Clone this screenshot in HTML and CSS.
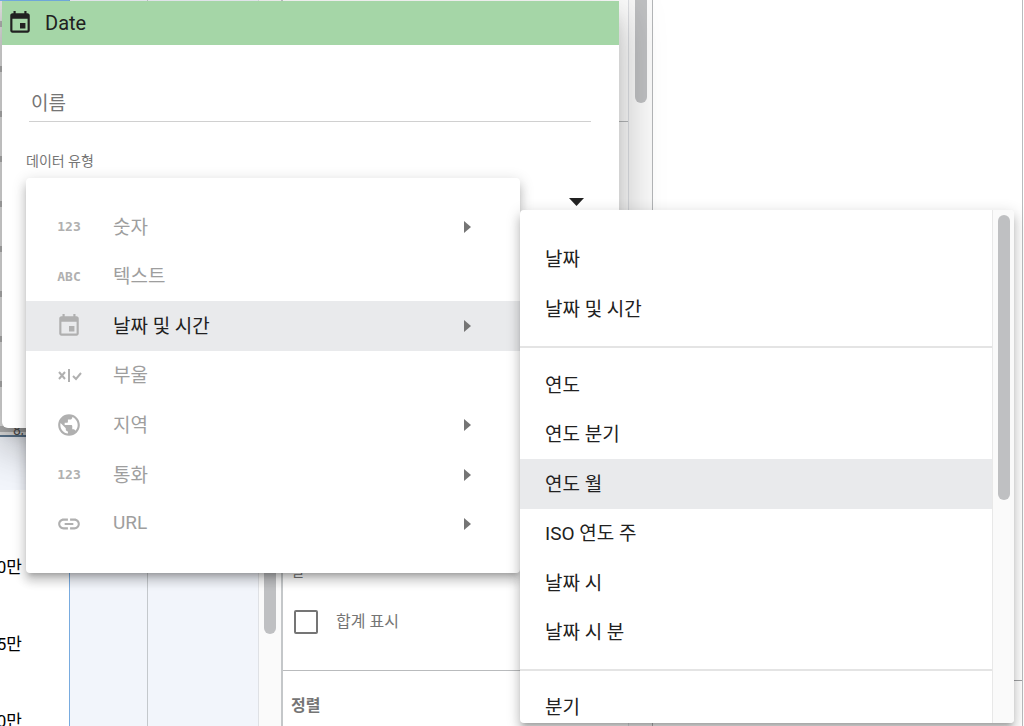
FILE: index.html
```
<!DOCTYPE html>
<html lang="ko">
<head>
    <meta charset="utf-8">
    <title>Date</title>
    <link rel="stylesheet" href="styles.css">
</head>

<body>
<svg class="sprite" aria-hidden="true">
  <symbol id="calendar" viewBox="0 0 24 24">
    <path d="M17 12h-5v5h5v-5zM16 1v2H8V1H6v2H5c-1.11 0-1.99.9-1.99 2L3 19c0 1.1.89 2 2 2h14c1.1 0 2-.9 2-2V5c0-1.1-.9-2-2-2h-1V1h-2zm3 18H5V8h14v11z"/>
  </symbol>
  <symbol id="arrow" viewBox="0 0 7 12">
    <path d="M0 0l7 6-7 6z"/>
  </symbol>
</svg>

<!-- report editor -->
<div class="report">
  <div class="chart">
    <div class="chart-rows"><span>8,</span></div>
    <div class="chart-band"></div>
    <ul class="axis">
      <li>0만</li>
      <li>5만</li>
      <li>0만</li>
    </ul>
  </div>
  <div class="canvas"></div>
  <div class="canvas wide"></div>
  <div class="track track-canvas"><div class="thumb"></div></div>
  <div class="setup">
    <div class="setup-section first"></div>
    <div class="setup-section totals">
      <span class="setup-label">열</span>
      <label class="check"><input type="checkbox">합계 표시</label>
    </div>
    <div class="setup-section">
      <h3>정렬</h3>
    </div>
  </div>
  <div class="track track-setup"><div class="thumb"></div></div>
  <div class="fields"></div>
</div>

<!-- field editor -->
<div class="dialog">
  <div class="dialog-head">
    <svg class="icon"><use href="#calendar"/></svg>
    <span>Date</span>
  </div>
  <div class="dialog-body">
    <input class="name" type="text" placeholder="이름" aria-label="이름">
    <label class="type-label" for="type">데이터 유형</label>
    <div class="type-box">
      <select id="type" class="type">
        <option></option>
      </select>
      <svg class="caret" viewBox="0 0 15 8"><path d="M0 0h15L7.500 8z"/></svg>
    </div>
  </div>
</div>

<!-- data type menu -->
<div class="menu types">
  <ul class="rows">
    <li><button class="item"><span class="glyph">123</span><span class="text">숫자</span><svg class="arrow"><use href="#arrow"/></svg></button></li>
    <li><button class="item"><span class="glyph">ABC</span><span class="text">텍스트</span></button></li>
    <li><button class="item on"><svg class="icon"><use href="#calendar"/></svg><span class="text">날짜 및 시간</span><svg class="arrow"><use href="#arrow"/></svg></button></li>
    <li><button class="item"><svg class="icon" viewBox="0 0 26 26"><path d="M3 10l6 7M9 10l-6 7M13 7v13M17 14l3 3 5-6" fill="none" stroke="currentColor" stroke-width="2"/></svg><span class="text">부울</span></button></li>
    <li><button class="item"><svg class="icon" viewBox="0 0 24 24"><path d="M12 2C6.480 2 2 6.480 2 12s4.480 10 10 10 10-4.480 10-10S17.520 2 12 2zm-1 17.930c-3.950-.49-7-3.850-7-7.930 0-.62.080-1.210.210-1.790L9 15v1c0 1.100.9 2 2 2v1.930zm6.900-2.540c-.26-.81-1-1.390-1.900-1.390h-1v-3c0-.55-.45-1-1-1H8v-2h2c.55 0 1-.45 1-1V7h2c1.100 0 2-.9 2-2v-.41c2.930 1.190 5 4.060 5 7.410 0 2.080-.8 3.970-2.100 5.390z"/></svg><span class="text">지역</span><svg class="arrow"><use href="#arrow"/></svg></button></li>
    <li><button class="item"><span class="glyph">123</span><span class="text">통화</span><svg class="arrow"><use href="#arrow"/></svg></button></li>
    <li><button class="item"><svg class="icon" viewBox="0 0 24 24"><path d="M3.900 12c0-1.710 1.390-3.100 3.100-3.100h4V7H7c-2.760 0-5 2.240-5 5s2.240 5 5 5h4v-1.900H7c-1.710 0-3.100-1.390-3.100-3.100zM8 13h8v-2H8v2zm9-6h-4v1.900h4c1.710 0 3.100 1.390 3.100 3.100s-1.390 3.100-3.100 3.100h-4V17h4c2.760 0 5-2.240 5-5s-2.240-5-5-5z"/></svg><span class="text">URL</span><svg class="arrow"><use href="#arrow"/></svg></button></li>
  </ul>
</div>

<!-- date format submenu -->
<div class="menu formats">
  <div class="groups">
    <ul class="group two">
      <li><button class="item">날짜</button></li>
      <li><button class="item">날짜 및 시간</button></li>
    </ul>
    <ul class="group six">
      <li><button class="item">연도</button></li>
      <li><button class="item">연도 분기</button></li>
      <li><button class="item on">연도 월</button></li>
      <li><button class="item">ISO 연도 주</button></li>
      <li><button class="item">날짜 시</button></li>
      <li><button class="item">날짜 시 분</button></li>
    </ul>
    <ul class="group">
      <li><button class="item">분기</button></li>
    </ul>
  </div>
  <div class="track track-menu"><div class="thumb"></div></div>
</div>
</body>
</html>
```

FILE: styles.css
```
* {
  box-sizing: border-box;
}

body {
  margin: 0;
  overflow: hidden;
  background: #fff;
  color: #212121;
  font-family: Roboto, "Noto Sans CJK KR", sans-serif;
}

ul {
  list-style: none;
  margin: 0;
  padding: 0;
}

button, input, select {
  font: inherit;
  color: inherit;
}

.sprite {
  display: none;
}

.icon {
  width: 26px;
  height: 26px;
  fill: currentColor;
}

/* report editor */
.report {
  display: flex;
  height: 100vh;
}

.chart {
  width: 70px;
  border-right: 1px solid #78abdf;
}

.chart-rows {
  display: flex;
  align-items: flex-end;
  height: 437px;
  padding-left: 13px;
  overflow: hidden;
  border-top: 1px solid #78b4ea;
  border-bottom: 2px solid #5d7891;
  background: repeating-linear-gradient(#e4e4e4 0 20px, #b4b4b4 20px 26px, #e4e4e4 26px 45px);
  color: #555;
  font-size: 14px;
  line-height: 10px;
}

.chart-band {
  height: 53px;
  background: #f2f5fb;
}

.axis {
  display: grid;
  grid-auto-rows: 77px;
  align-items: center;
  justify-content: end;
  padding-top: 37px;
  padding-right: 47px;
  color: #000;
  font-size: 17px;
}

.axis li {
  white-space: nowrap;
}

.canvas {
  width: 78px;
  background: #f2f5fb;
  border-right: 1px solid #c4c8cc;
}

.wide {
  width: 111px;
  border-right-color: #dfe1e5;
}

.track {
  flex: none;
  background: #fafafa;
}

.thumb {
  width: 12px;
  border-radius: 6px;
  background: #bfc0c2;
}

.track-canvas {
  width: 24px;
  padding: 340px 0 0 5px;
  border-right: 2px solid #c4c7c9;
}

.track-canvas .thumb {
  height: 294px;
}

.setup {
  width: 345px;
}

.setup-section {
  padding: 24px 8px;
  border-bottom: 1px solid #b9bbbd;
}

.setup-section:last-child {
  border: 0;
}

.first {
  height: 122px;
}

.totals {
  display: flex;
  flex-direction: column;
  justify-content: flex-end;
  gap: 29px;
  height: 549px;
  padding: 0 8px 36px;
  color: #757575;
}

.setup-label {
  font-size: 14px;
  line-height: 20px;
}

.check {
  display: flex;
  align-items: center;
  gap: 18px;
  padding-left: 3px;
  font-size: 16px;
  line-height: 24px;
}

.check input {
  appearance: none;
  width: 24px;
  height: 24px;
  margin: 0;
  border: 2px solid #757575;
  border-radius: 2px;
}

.setup h3 {
  margin: 0;
  color: #757575;
  font-size: 16px;
  font-weight: 700;
  line-height: 22px;
}

.track-setup {
  width: 25px;
  padding-left: 6px;
  border-left: 1px solid #dfe1e5;
  border-right: 1px solid #b4b6b8;
}

.track-setup .thumb {
  height: 103px;
  border-radius: 0 0 6px 6px;
}

.fields {
  flex: 1;
  margin-right: 1px;
  border-right: 1px solid #b9bbbd;
  background: linear-gradient(#a0a2a4, #a0a2a4) 0 680px / 100% 1px no-repeat;
}

/* field editor */
.dialog {
  position: absolute;
  top: 1px;
  left: 2px;
  width: 617px;
  height: 427px;
  border-radius: 0 0 6px 6px;
  background: #fff;
  box-shadow: 0 11px 15px -7px rgba(0,0,0,.2), 0 24px 38px 3px rgba(0,0,0,.14), 0 9px 46px 8px rgba(0,0,0,.12);
}

.dialog-head {
  display: flex;
  align-items: center;
  gap: 12px;
  height: 44px;
  padding-left: 5px;
  background: #a5d6a7;
  font-size: 20px;
}

.dialog-body {
  display: flex;
  flex-direction: column;
  padding: 38px 28px 0 27px;
  color: #757575;
}

.name {
  height: 39px;
  padding: 2px 2px 0;
  border: 0;
  border-bottom: 1px solid #d0d0d0;
  background: none;
  font-size: 19px;
}

.name::placeholder {
  color: #757575;
}

.type-label {
  margin: 28px 0 8px -3px;
  font-size: 14px;
  line-height: 22px;
}

.type-box {
  display: grid;
  align-items: center;
}

.type, .caret {
  grid-area: 1 / 1;
}

.type {
  appearance: none;
  height: 44px;
  border: 0;
  background: none;
}

.caret {
  justify-self: end;
  width: 15px;
  height: 8px;
  margin-right: 7px;
  fill: #212121;
}

/* menus */
.menu {
  position: absolute;
  width: 494px;
  border-radius: 4px;
  background: #fff;
  box-shadow: 0 5px 5px -3px rgba(0,0,0,.2), 0 8px 10px 1px rgba(0,0,0,.14), 0 3px 14px 2px rgba(0,0,0,.12);
}

.item {
  display: flex;
  align-items: center;
  width: 100%;
  height: 100%;
  padding: 0 25px 3px;
  border: 0;
  background: none;
  font-size: 19px;
  text-align: left;
}

.item.on {
  background: #e9eaec;
}

.types {
  top: 178px;
  left: 26px;
  padding: 24px 0;
}

.rows {
  display: grid;
  grid-auto-rows: 1fr;
  height: 347px;
}

.types .item {
  padding: 0 49px 0 30px;
  color: #9e9e9e;
}

.types .icon, .glyph {
  flex: none;
  width: 26px;
  color: #b0b0b0;
}

.glyph {
  font: bold 13px "DejaVu Sans Mono", monospace;
  text-align: center;
}

.text {
  flex: 1;
  padding: 0 0 3px 31px;
}

.types .on .text {
  color: #212121;
}

.arrow {
  width: 7px;
  height: 12px;
  fill: #757575;
}

.formats {
  display: flex;
  top: 210px;
  left: 520px;
  height: 513px;
  overflow: hidden;
}

.groups {
  flex: 1;
  padding-top: 12px;
}

.group {
  display: grid;
  grid-auto-rows: 1fr;
  height: 74px;
  padding: 12px 0;
}

.group + .group {
  border-top: 2px solid #e4e4e4;
}

.two {
  height: 124px;
}

.six {
  height: 323px;
}

.track-menu {
  width: 22px;
  padding: 5px 0 0 5px;
  border-left: 1px solid #e8e8e8;
}

.track-menu .thumb {
  height: 285px;
}
```
